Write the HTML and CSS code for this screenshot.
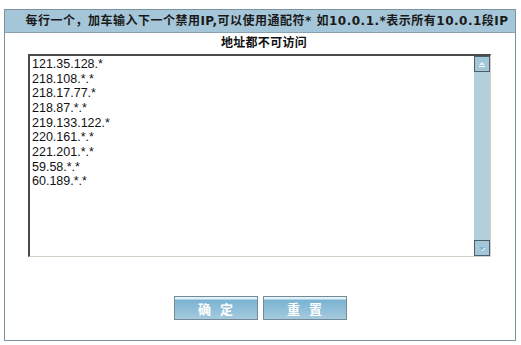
FILE: index.html
```html
<!DOCTYPE html>
<html lang="zh-CN">
<head>
  <meta charset="UTF-8">
  <title>禁用IP</title>
  <link rel="stylesheet" href="styles.css">
</head>
<body>
  <div class="panel">
    <div class="panel-head">每行一个，加车输入下一个禁用IP,可以使用通配符* 如10.0.1.*表示所有10.0.1段IP</div>
    <div class="subtitle">地址都不可访问</div>
    <div class="ipbox">
      <div class="ipbox-text">
        <div>121.35.128.*</div>
        <div>218.108.*.*</div>
        <div>218.17.77.*</div>
        <div>218.87.*.*</div>
        <div>219.133.122.*</div>
        <div>220.161.*.*</div>
        <div>221.201.*.*</div>
        <div>59.58.*.*</div>
        <div>60.189.*.*</div>
      </div>
      <div class="scroll">
        <div class="scroll-btn">
          <svg width="14" height="14" viewBox="0 0 14 14"><path d="M4 8 L7 5 L10 8 Z" fill="#e6f2f8"/><path d="M4 9.5 H10" stroke="#ffffff" stroke-width="1"/></svg>
        </div>
        <div class="scroll-track"></div>
        <div class="scroll-btn">
          <svg width="14" height="14" viewBox="0 0 14 14"><path d="M4 6 L10 6 L7 9 Z" fill="#7fb6d4"/><path d="M7 10 L10 7" stroke="#ffffff" stroke-width="1"/></svg>
        </div>
      </div>
    </div>
    <div class="actions">
      <button type="button" class="btn">确&nbsp;&nbsp;定</button>
      <button type="button" class="btn">重&nbsp;&nbsp;置</button>
    </div>
  </div>
</body>
</html>
```
FILE: styles.css
```css
body {
  margin: 0;
  padding: 0;
  background: #fff;
  color: #111;
  font-family: "DejaVu Sans", "Noto Sans CJK SC", sans-serif;
}
.panel {
  width: 510px;
  height: 330px;
  margin: 9px 0 0 4px;
  border: 1px solid #7b939f;
  display: flex;
  flex-direction: column;
}
.panel-head {
  height: 22px;
  line-height: 22px;
  padding-left: 14px;
  background: #a5c6d8;
  border-bottom: 1px solid #8aa3b0;
  font-size: 12px;
  font-weight: bold;
  color: #1a1a1a;
  text-align: center;
  white-space: nowrap;
  letter-spacing: 0.5px;
}
.subtitle {
  height: 20px;
  line-height: 20px;
  padding-left: 8px;
  text-align: center;
  font-size: 12px;
  font-weight: bold;
  color: #111;
  letter-spacing: 0.3px;
}
.ipbox {
  width: 460px;
  height: 200px;
  margin: 1px 0 0 23px;
  border-top: 2px solid #4a4a4a;
  border-left: 2px solid #4a4a4a;
  border-right: 1px solid #d4d0c8;
  border-bottom: 1px solid #d4d0c8;
  display: flex;
}
.ipbox-text {
  flex: 1;
  padding: 1px 2px;
  font-family: "Liberation Sans", Arial, sans-serif;
  font-size: 12.5px;
  line-height: 14.67px;
  color: #111;
}
.scroll {
  width: 16px;
  display: flex;
  flex-direction: column;
  background: #b4cfdc;
}
.scroll-btn {
  width: 14px;
  height: 14px;
  border: 1px solid #4d5d66;
  background: #a3c7da;
}
.scroll-btn svg {
  display: block;
}
.scroll-track {
  flex: 1;
}
.actions {
  display: flex;
  justify-content: center;
  gap: 5px;
  margin-top: 39px;
}
.btn {
  width: 84px;
  height: 24px;
  padding: 0;
  border: 1px solid #748b97;
  background: linear-gradient(to bottom, #e2f1f8 0, #e2f1f8 2px, #7ab3d2 3px, #a6cade 100%);
  color: #fff;
  font-family: "DejaVu Sans", "Noto Sans CJK SC", sans-serif;
  font-size: 13px;
  font-weight: bold;
  cursor: pointer;
}
```
